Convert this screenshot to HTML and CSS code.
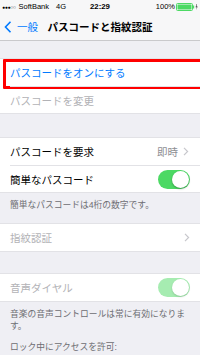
FILE: index.html
```html
<!DOCTYPE html>
<html lang="ja">
<head>
<meta charset="utf-8">
<link rel="stylesheet" href="styles.css">
</head>
<body>
<header class="top">
  <div class="status">
    <div class="st-left"><span class="dots">●●●○○</span><span>SoftBank</span><span class="net">4G</span></div>
    <div class="st-time">22:29</div>
    <div class="st-right"><span>100%</span>
      <svg class="battery" width="22" height="8" viewBox="0 0 22 8">
        <rect x="0.5" y="0.5" width="16" height="7" rx="1" fill="none" stroke="#4cd964"/>
        <rect x="1.5" y="1.5" width="14" height="5" fill="#4cd964"/>
        <rect x="17" y="2.5" width="1.2" height="3" fill="#4cd964"/>
        <path d="M20.6 1 L19.6 4.2 L20.8 4.2 L20.2 7 L21.6 3.4 L20.4 3.4 L21 1 Z" fill="#222"/>
      </svg>
    </div>
  </div>
  <nav class="nav">
    <div class="back">
      <svg width="8" height="12" viewBox="0 0 8 12"><path d="M6.5 0.8 L1.5 6 L6.5 11.2" fill="none" stroke="#007aff" stroke-width="1.6"/></svg>
      <span>一般</span>
    </div>
    <div class="title">パスコードと指紋認証</div>
    <div></div>
  </nav>
</header>

<main>
  <section class="group g1">
    <div class="row blue highlight">パスコードをオンにする</div>
    <div class="row dim">パスコードを変更</div>
  </section>

  <section class="group g2">
    <div class="row"><span>パスコードを要求</span><span class="detail">即時<svg width="6" height="9" viewBox="0 0 6 9"><path d="M1 0.8 L4.6 4.5 L1 8.2" fill="none" stroke="#c7c7cc" stroke-width="1.2"/></svg></span></div>
    <div class="row"><span>簡単なパスコード</span><span class="toggle"></span></div>
  </section>
  <p class="foot f1">簡単なパスコードは4桁の数字です。</p>

  <section class="group g3">
    <div class="row dim"><span>指紋認証</span><svg width="6" height="9" viewBox="0 0 6 9"><path d="M1 0.8 L4.6 4.5 L1 8.2" fill="none" stroke="#c7c7cc" stroke-width="1.2"/></svg></div>
  </section>

  <section class="group g4">
    <div class="row dim"><span>音声ダイヤル</span><span class="toggle off"></span></div>
  </section>
  <p class="foot f2">音楽の音声コントロールは常に有効になります。</p>
  <p class="head">ロック中にアクセスを許可:</p>
</main>
</body>
</html>
```

FILE: styles.css
```css
* { box-sizing: border-box; }
html, body { margin: 0; padding: 0; }
body {
  width: 200px;
  height: 355px;
  overflow: hidden;
  background: #efeff4;
  font-family: "Liberation Sans", "Noto Sans CJK JP", sans-serif;
  color: #000;
}
.top {
  background: #f7f7f8;
  border-bottom: 1px solid #c9c9cc;
  height: 41px;
}
.status {
  height: 13px;
  display: grid;
  grid-template-columns: 1fr auto 1fr;
  align-items: center;
  font-size: 7.5px;
  padding: 0 2px 0 2px;
}
.st-left { display: flex; gap: 3px; align-items: center; }
.dots { font-size: 5px; letter-spacing: -0.3px; }
.net { margin-left: 4px; }
.st-time { font-weight: bold; font-size: 7.8px; }
.st-right { display: flex; justify-content: flex-end; align-items: center; gap: 1px; }
.battery { display: block; }
.nav {
  height: 27px;
  display: grid;
  grid-template-columns: 1fr auto 1fr;
  align-items: center;
}
.back {
  display: flex;
  align-items: center;
  gap: 5px;
  padding-left: 4px;
  color: #007aff;
  font-size: 10.5px;
}
.back svg { display: block; }
.title {
  font-weight: bold;
  font-size: 10.5px;
  color: #000;
}
.group {
  background: #fff;
  border-top: 1px solid #e2e2e6;
  border-bottom: 1px solid #e2e2e6;
}
.g1 { margin-top: 17px; }
.g2 { margin-top: 23px; }
.g3 { margin-top: 0; }
.g4 { margin-top: 21px; }
.row {
  height: 27px;
  margin-left: 10px;
  padding-right: 10px;
  display: flex;
  align-items: center;
  justify-content: space-between;
  font-size: 10.5px;
  position: relative;
}
.row + .row { border-top: 1px solid #e2e2e6; }
.blue { color: #007aff; }
.dim { color: #b2b2b6; }
.highlight::after {
  content: "";
  position: absolute;
  left: -7px;
  right: -6px;
  top: 0;
  bottom: -3px;
  border: 3px solid #ff0000;
  border-radius: 1px;
}
.detail {
  display: flex;
  align-items: center;
  gap: 5px;
  color: #8e8e93;
  margin-right: 1px;
}
.detail svg, .row > svg { display: block; }
.toggle {
  width: 32px;
  height: 19px;
  border-radius: 10px;
  background: #4cd964;
  position: relative;
}
.toggle::after {
  content: "";
  position: absolute;
  right: 1px;
  top: 1px;
  width: 17px;
  height: 17px;
  border-radius: 50%;
  background: #fff;
  box-shadow: 0 1px 2px rgba(0,0,0,0.3);
}
.toggle.off { background: #a6ecb1; }
.toggle.off::after { box-shadow: 0 1px 2px rgba(0,0,0,0.15); }
.foot {
  margin: 0;
  padding: 6px 10px 0 10px;
  font-size: 8.75px;
  line-height: 12px;
  color: #6d6d72;
}
.f1 { padding-bottom: 12px; }
.f2 { padding-top: 6px; }
.head {
  margin: 0;
  padding: 9px 10px 0 10px;
  font-size: 8.75px;
  line-height: 12px;
  color: #6d6d72;
}
```
